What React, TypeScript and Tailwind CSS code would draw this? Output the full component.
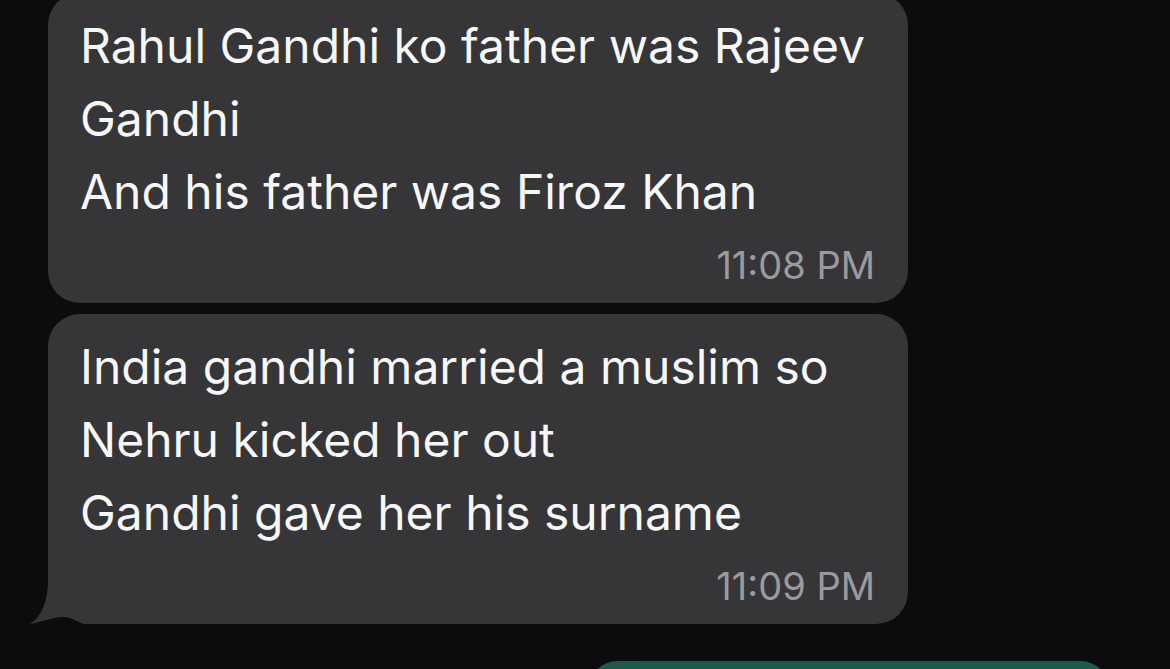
import React from "react";

const messages = [
  {
    lines: ["Rahul Gandhi ko father was Rajeev", "Gandhi", "And his father was Firoz Khan"],
    time: "11:08 PM",
  },
  {
    lines: ["India gandhi married a muslim so", "Nehru kicked her out", "Gandhi gave her his surname"],
    time: "11:09 PM",
  },
];

function Tail() {
  return (
    <svg className="absolute -left-[20px] bottom-0" width="60" height="45" viewBox="0 0 60 45">
      <path d="M20 0 C20 22 14 37 2 45 L22 45 Z" fill="#363638" />
      <path d="M2 45 C14 43 25 38 35 38 C44 38 49 43 56 45 Z" fill="#0c0b0d" />
    </svg>
  );
}

export default function App() {
  return (
    <div
      className="h-[669px] w-[1170px] overflow-hidden bg-[#0c0b0d] text-white"
      style={{ fontFamily: "Inter, 'Noto Sans', sans-serif" }}
    >
      <div className="flex flex-col pl-[48px]">
        {messages.map((m, i) => (
          <div
            key={m.time}
            className={
              i === 0
                ? "relative -mt-[7px] w-[860px] rounded-[32px] bg-[#363638] pb-[18px] pl-[32px] pr-[33px] pt-[15.5px]"
                : "relative mt-[11px] w-[860px] rounded-[32px] rounded-bl-none bg-[#363638] pb-[18px] pl-[32px] pr-[33px] pt-[15.5px]"
            }
          >
            {m.lines.map((l) => (
              <p key={l} className="text-[48px] leading-[73px] text-[#f7f7f7]">
                {l}
              </p>
            ))}
            <p className="mt-[17.5px] text-right text-[38px] leading-[40px] text-[#9b9aa0]">{m.time}</p>
            {i === 1 ? <Tail /> : null}
          </div>
        ))}
        <div className="mr-[60px] mt-[37px] h-[60px] w-[522px] self-end rounded-[30px] bg-[#1f5b4d]" />
      </div>
    </div>
  );
}
